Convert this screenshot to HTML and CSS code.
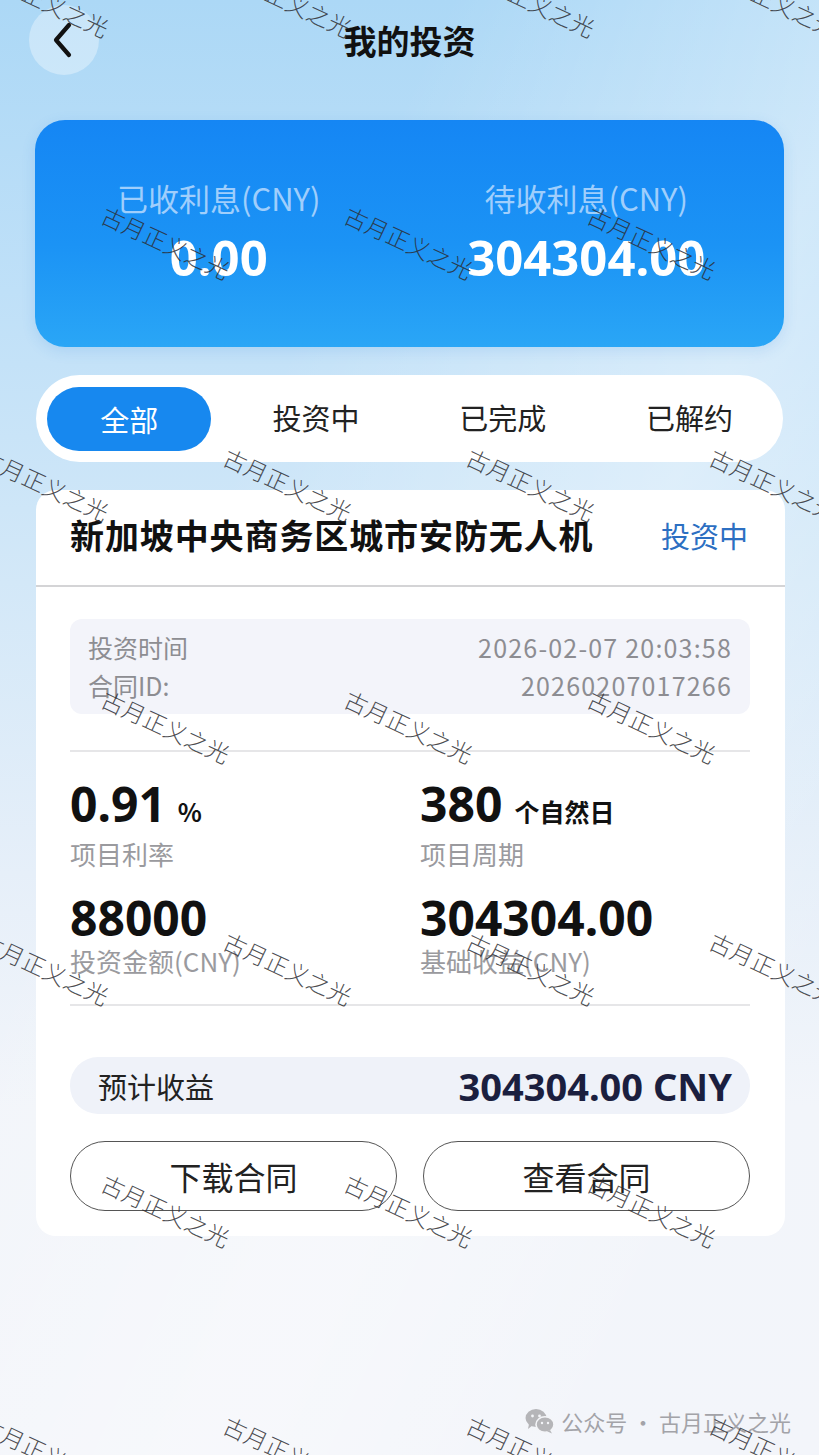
FILE: index.html
```html
<!DOCTYPE html>
<html lang="zh-CN">
<head>
<meta charset="utf-8">
<title>我的投资</title>
<link rel="stylesheet" href="styles.css">
</head>
<body>
<div class="page">
  <header class="topbar">
    <button class="back" aria-label="返回">
      <svg width="24" height="36" viewBox="0 0 24 36"><path d="M18 3 L5 18 L18 33" fill="none" stroke="#111" stroke-width="4.2" stroke-linecap="round" stroke-linejoin="round"/></svg>
    </button>
    <h1 class="title">我的投资</h1>
    <span></span>
  </header>

  <section class="summary">
    <div class="sum-col">
      <div class="sum-label">已收利息(CNY)</div>
      <div class="sum-value">0.00</div>
    </div>
    <div class="sum-col">
      <div class="sum-label">待收利息(CNY)</div>
      <div class="sum-value">304304.00</div>
    </div>
  </section>

  <nav class="tabs">
    <span class="tab active">全部</span>
    <span class="tab">投资中</span>
    <span class="tab">已完成</span>
    <span class="tab">已解约</span>
  </nav>

  <section class="card">
    <div class="card-head">
      <h2 class="card-title">新加坡中央商务区城市安防无人机</h2>
      <span class="status">投资中</span>
    </div>
    <div class="card-body">
      <div class="meta">
        <div class="meta-row"><span>投资时间</span><span class="meta-val">2026-02-07 20:03:58</span></div>
        <div class="meta-row"><span>合同ID:</span><span class="meta-val">20260207017266</span></div>
      </div>
      <div class="sep"></div>
      <div class="stats">
        <div class="stat">
          <div class="stat-value">0.91<small>%</small></div>
          <div class="stat-label">项目利率</div>
        </div>
        <div class="stat">
          <div class="stat-value">380<small>个自然日</small></div>
          <div class="stat-label">项目周期</div>
        </div>
        <div class="stat">
          <div class="stat-value">88000</div>
          <div class="stat-label">投资金额(CNY)</div>
        </div>
        <div class="stat">
          <div class="stat-value">304304.00</div>
          <div class="stat-label">基础收益(CNY)</div>
        </div>
      </div>
      <div class="sep sep-after"></div>
      <div class="estimate">
        <span class="est-label">预计收益</span>
        <span class="est-value">304304.00 CNY</span>
      </div>
      <div class="actions">
        <button class="btn">下载合同</button>
        <button class="btn">查看合同</button>
      </div>
    </div>
  </section>

  <footer class="source">
    <svg class="wx" width="30" height="26" viewBox="0 0 30 26">
      <ellipse cx="11" cy="10" rx="10.5" ry="9" fill="#b5b5b8"/>
      <path d="M4 16 L3 21 L8 17 Z" fill="#b5b5b8"/>
      <circle cx="7.5" cy="8" r="1.4" fill="#f4f5f8"/>
      <circle cx="14.5" cy="8" r="1.4" fill="#f4f5f8"/>
      <ellipse cx="20" cy="16.5" rx="9" ry="7.8" fill="#b5b5b8" stroke="#f4f5f8" stroke-width="1.6"/>
      <path d="M25 22 L27 25.5 L22 23.3 Z" fill="#b5b5b8"/>
      <circle cx="17" cy="15" r="1.2" fill="#f4f5f8"/>
      <circle cx="23" cy="15" r="1.2" fill="#f4f5f8"/>
    </svg>
    <span>公众号 · 古月正义之光</span>
  </footer>

  <div class="watermarks" aria-hidden="true">
    <div class="wm-row a"><span class="wm"><i>古月正义之光</i></span><span class="wm"><i>古月正义之光</i></span><span class="wm"><i>古月正义之光</i></span><span class="wm"><i>古月正义之光</i></span></div>
    <div class="wm-row b"><span class="wm"><i>古月正义之光</i></span><span class="wm"><i>古月正义之光</i></span><span class="wm"><i>古月正义之光</i></span></div>
    <div class="wm-row a"><span class="wm"><i>古月正义之光</i></span><span class="wm"><i>古月正义之光</i></span><span class="wm"><i>古月正义之光</i></span><span class="wm"><i>古月正义之光</i></span></div>
    <div class="wm-row b"><span class="wm"><i>古月正义之光</i></span><span class="wm"><i>古月正义之光</i></span><span class="wm"><i>古月正义之光</i></span></div>
    <div class="wm-row a"><span class="wm"><i>古月正义之光</i></span><span class="wm"><i>古月正义之光</i></span><span class="wm"><i>古月正义之光</i></span><span class="wm"><i>古月正义之光</i></span></div>
    <div class="wm-row b"><span class="wm"><i>古月正义之光</i></span><span class="wm"><i>古月正义之光</i></span><span class="wm"><i>古月正义之光</i></span></div>
    <div class="wm-row a"><span class="wm"><i>古月正义之光</i></span><span class="wm"><i>古月正义之光</i></span><span class="wm"><i>古月正义之光</i></span><span class="wm"><i>古月正义之光</i></span></div>
  </div>
</div>
</body>
</html>
```

FILE: styles.css
```css
* { box-sizing: border-box; }
html, body { margin: 0; padding: 0; }
body { background: #f3f5fa; }

.page {
  position: relative;
  width: 819px;
  height: 1455px;
  overflow: hidden;
  font-family: "Noto Sans CJK SC", "Noto Sans", sans-serif;
  color: #111;
  background:
    linear-gradient(115deg, rgba(255,255,255,0) 30%, rgba(255,255,255,0.35) 60%, rgba(255,255,255,0) 85%),
    linear-gradient(180deg, #acd8f6 0%, #bfe0f8 20%, #d3e8f8 40%, #e6eff9 60%, #f2f5fa 76%, #f3f5fa 100%);
}

/* top bar */
.topbar {
  display: grid;
  grid-template-columns: 1fr auto 1fr;
  align-items: center;
  height: 80px;
}
.back {
  justify-self: start;
  margin-left: 29px;
  width: 70px;
  height: 70px;
  border: none;
  border-radius: 50%;
  background: rgba(255,255,255,0.35);
  display: flex;
  align-items: center;
  justify-content: center;
  padding: 0 3px 0 0;
}
.title {
  margin: 0;
  font-size: 33px;
  font-weight: 700;
  line-height: 70px;
  color: #111;
}

/* summary */
.summary {
  margin: 40px 35px 0;
  height: 227px;
  border-radius: 30px;
  background: linear-gradient(180deg, #1586f4 0%, #1b93f5 55%, #2aa6f6 100%);
  display: grid;
  grid-template-columns: 1fr 1fr;
  padding: 60px 14px 0 0;
  box-shadow: 0 4px 14px rgba(40,130,220,0.15);
}
.sum-col { display: flex; flex-direction: column; align-items: center; gap: 12px; }
.sum-label {
  font-size: 31px;
  line-height: 36px;
  color: rgba(205,228,255,0.75);
}
.sum-value {
  font-family: "Noto Sans", "Noto Sans CJK SC", sans-serif;
  font-size: 49px;
  line-height: 58px;
  font-weight: 700;
  color: #fff;
}

/* tabs */
.tabs {
  margin: 28px 36px 0;
  height: 87px;
  border-radius: 44px;
  background: #fff;
  display: grid;
  grid-template-columns: repeat(4, 1fr);
  align-items: center;
  justify-items: center;
}
.tab {
  font-size: 29px;
  color: #222;
  line-height: 64px;
  padding-bottom: 3px;
}
.tab.active {
  width: 164px;
  height: 64px;
  border-radius: 32px;
  background: #1788ef;
  color: #fff;
  text-align: center;
}

/* card */
.card {
  margin: 28px 34px 0 36px;
  background: #fff;
  border-radius: 20px;
  padding-bottom: 25px;
}
.card-head {
  height: 97px;
  display: flex;
  align-items: center;
  justify-content: space-between;
  padding: 0 37px 6px 34px;
  border-bottom: 2px solid #d4d4d6;
}
.card-title {
  margin: 0;
  font-size: 34px;
  font-weight: 700;
  color: #111;
  letter-spacing: 0.9px;
}
.status {
  font-size: 29px;
  color: #2c6fc2;
}
.card-body { padding: 0 35px 0 34px; }

.meta {
  margin-top: 32px;
  background: #f3f4fa;
  border-radius: 12px;
  padding: 9px 18px 10px;
  display: flex;
  flex-direction: column;
}
.meta-row {
  display: flex;
  justify-content: space-between;
  font-size: 25px;
  line-height: 38px;
  color: #8d8d92;
}
.meta-val { letter-spacing: 1.2px; }

.sep { height: 2px; background: #e6e6e8; margin-top: 36px; }

.stats {
  display: grid;
  grid-template-columns: 350px 1fr;
  row-gap: 16px;
  padding-top: 24px;
}
.stat { display: flex; flex-direction: column; }
.stat-value {
  font-family: "Noto Sans", "Noto Sans CJK SC", sans-serif;
  font-size: 48px;
  font-weight: 700;
  line-height: 56px;
  color: #111;
}
.stat-value small {
  font-family: "Noto Sans CJK SC", sans-serif;
  font-size: 25px;
  margin-left: 12px;
  font-weight: 700;
}
.stat-label {
  font-size: 26px;
  line-height: 40px;
  margin-top: -5px;
  color: #9a9a9e;
}
.sep.sep-after { margin-top: 23px; }

.estimate {
  margin-top: 51px;
  height: 57px;
  border-radius: 28px;
  background: #eff2f9;
  display: flex;
  align-items: center;
  justify-content: space-between;
  padding: 0 18px 0 28px;
}
.est-label { font-size: 29px; color: #222; }
.est-value {
  font-family: "Noto Sans", "Noto Sans CJK SC", sans-serif;
  font-size: 38px;
  font-weight: 700;
  color: #1b1f3f;
}

.actions {
  margin-top: 27px;
  display: grid;
  grid-template-columns: 1fr 1fr;
  column-gap: 26px;
}
.btn {
  height: 70px;
  border: 1.5px solid #555;
  border-radius: 36px;
  background: #fff;
  font-family: "Noto Sans CJK SC", sans-serif;
  font-size: 32px;
  color: #222;
}

/* footer */
.source {
  position: absolute;
  right: 28px;
  top: 1405px;
  display: flex;
  align-items: center;
  gap: 6px;
  font-size: 22px;
  color: #a3a3a8;
}

/* watermark overlay */
.watermarks {
  position: absolute;
  top: -121px;
  left: 0;
  width: 819px;
  pointer-events: none;
}
.wm-row { display: flex; height: 242px; align-items: center; }
.wm-row.a { margin-left: -77px; }
.wm-row.b { margin-left: 44px; }
.wm {
  flex: none;
  width: 243px;
  display: flex;
  justify-content: center;
}
.wm i {
  font-style: normal;
  display: block;
  transform: rotate(25deg);
  font-size: 23px;
  font-weight: 300;
  color: rgba(45,45,50,0.85);
  white-space: nowrap;
}
```
